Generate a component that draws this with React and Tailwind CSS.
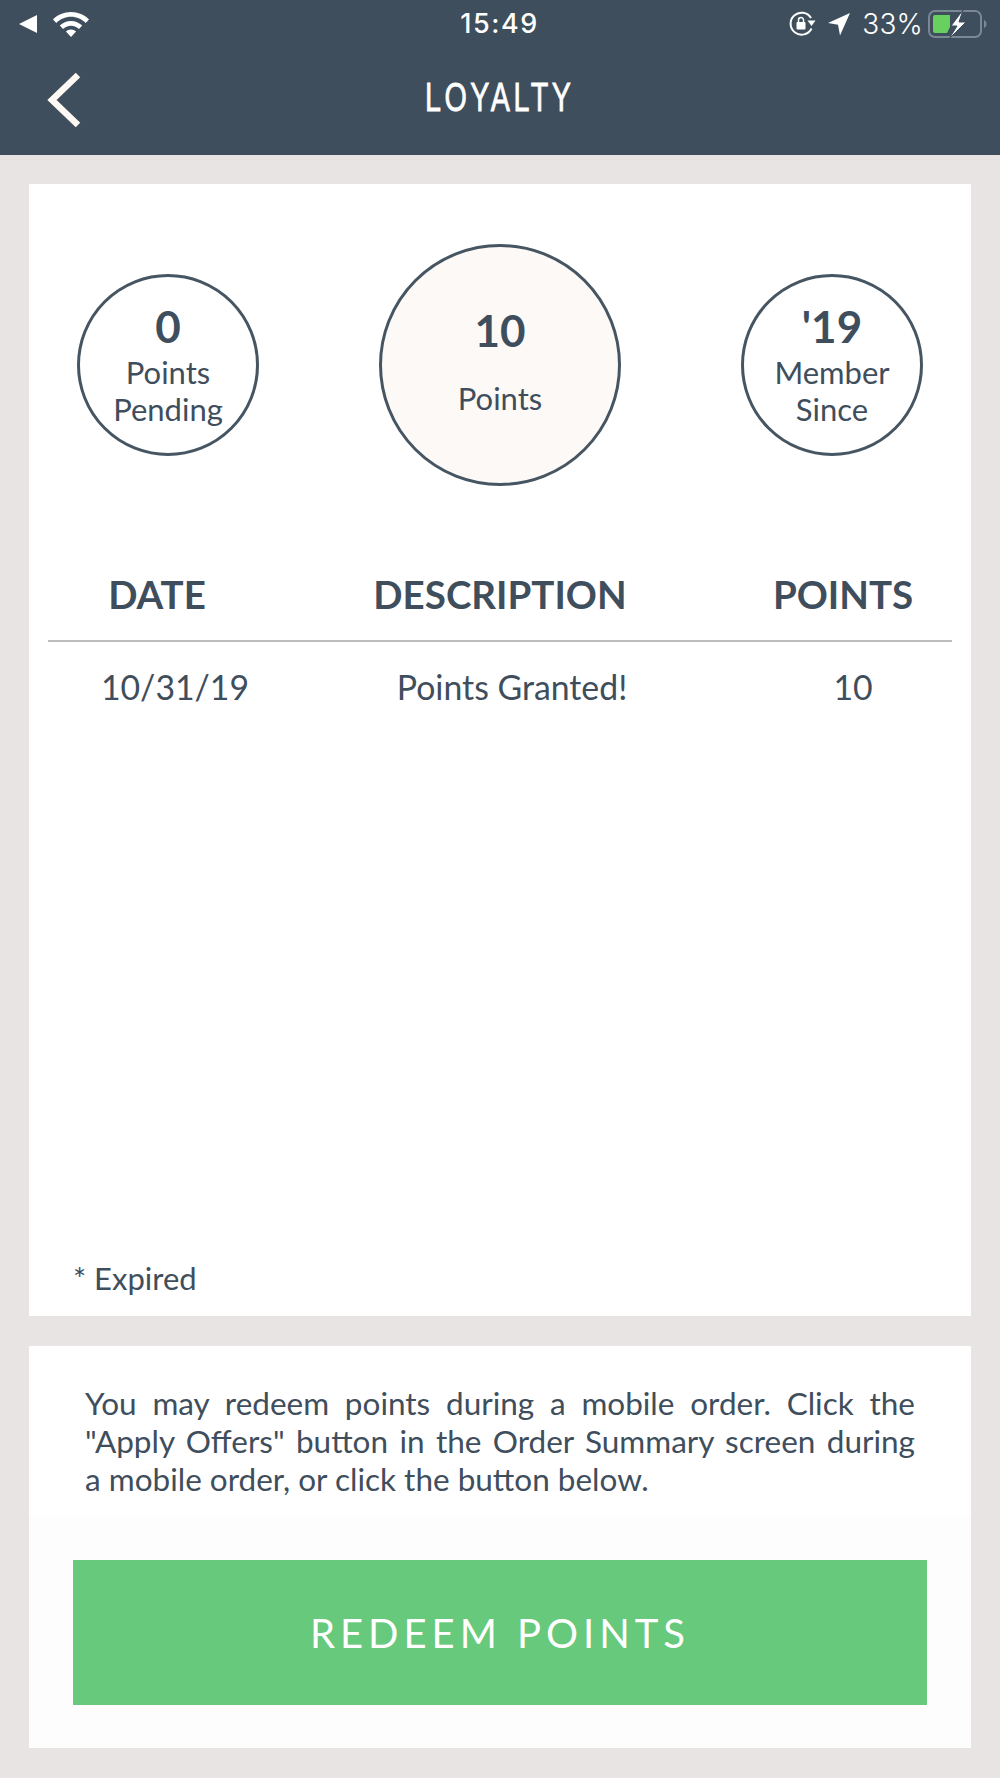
const Circle = ({ value, lines }) => (
  <div className="w-[182px] h-[182px] rounded-full border-[3px] border-[#465562] flex flex-col items-center pt-[25px] text-[#3f4e5c]">
    <p className="text-[44px] leading-[48px] font-bold mb-[4px]">{value}</p>
    {lines.map((line) => (
      <p key={line} className="text-[31px] leading-[37px]">
        {line}
      </p>
    ))}
  </div>
);

const WifiIcon = () => (
  <svg width="38" height="28" viewBox="0 0 38 28" fill="#fff">
    <path d="M19 2C12 2 5.500 4.800 1 9.500L4.300 13C8 9.200 13.300 6.800 19 6.800S30 9.200 33.700 13L37 9.500C32.500 4.800 26 2 19 2Z" />
    <path d="M19 11C14.700 11 10.700 12.700 7.800 15.600L11 19C13 17 15.900 15.700 19 15.700S25 17 27 19L30.200 15.600C27.300 12.700 23.300 11 19 11Z" />
    <path d="M19 19.500C17 19.500 15.200 20.300 13.900 21.600L19 27L24.100 21.600C22.800 20.300 21 19.500 19 19.500Z" />
  </svg>
);

const RotationLockIcon = () => (
  <svg width="28" height="26" viewBox="0 0 28 26" fill="none">
    <path d="M23.500 17.500A11 11 0 1 1 23 7" stroke="#fff" strokeWidth="2" />
    <path d="M19.500 9.500H27.500L23.500 15Z" fill="#fff" />
    <rect x="8.500" y="11" width="9" height="7.500" rx="1" fill="#fff" />
    <path d="M10.500 11V9A2.500 2.500 0 0 1 15.500 9V11" stroke="#fff" strokeWidth="1.500" />
  </svg>
);

const LocationIcon = () => (
  <svg width="24" height="24" viewBox="0 0 24 24" fill="#fff">
    <path d="M23 1L13 23.500L11 12.800L1 11Z" />
  </svg>
);

const BatteryIcon = () => (
  <svg width="60" height="30" viewBox="0 0 60 30" fill="none">
    <rect x="1" y="2" width="52" height="26" rx="6" stroke="#7b8792" strokeWidth="2" />
    <path d="M56 11C58 12 58.500 13.500 58.500 15S58 18 56 19Z" fill="#7b8792" />
    <path d="M7 6Q5 6 5 8V22Q5 24 7 24H19L22 18V6Z" fill="#67d05f" />
    <path d="M35 1L23 17H29L21 30L38 13H31Z" fill="#fff" stroke="#3f4e5c" strokeWidth="1" />
  </svg>
);

const App = () => {
  return (
    <div className="w-[1000px] h-[1778px] bg-[#e8e4e3] [font-family:Lato,sans-serif] text-[#3f4e5c] overflow-hidden">
      <header className="h-[155px] bg-[#3f4e5c] text-white">
        <div className="h-[48px] pl-[18px] pr-[12px] flex items-center justify-between">
          <div className="w-[300px] flex items-center gap-[14px]">
            <svg width="20" height="20" viewBox="0 0 20 20" fill="#fff">
              <path d="M19 1V19L1 10Z" />
            </svg>
            <WifiIcon />
          </div>
          <p className="text-[27px] [font-family:Inter,sans-serif] font-medium tracking-[1.500px] mr-[7px]">15:49</p>
          <div className="w-[300px] flex items-center justify-end gap-[11px]">
            <RotationLockIcon />
            <LocationIcon />
            <span className="text-[28px] [font-family:Inter,sans-serif] font-light -mr-[6px] tracking-[0.2px]">33%</span>
            <BatteryIcon />
          </div>
        </div>
        <div className="relative h-[100px] flex items-center justify-center">
          <svg className="absolute left-[46px] top-[24px]" width="36" height="56" viewBox="0 0 36 56" fill="none">
            <path d="M32 3L6 28L32 53" stroke="#fffaf6" strokeWidth="6.500" />
          </svg>
          <h1 className="text-[41px] leading-[40px] [font-family:'Liberation_Sans',sans-serif] tracking-[5px] scale-x-[0.7] [-webkit-text-stroke:0.8px_white] -mt-[2px]">
            LOYALTY
          </h1>
        </div>
      </header>

      <main className="px-[29px] pt-[29px] flex flex-col gap-[30px]">
        <section className="h-[1132px] bg-white flex flex-col">
          <div className="h-[301px] pt-[61px] pl-[48px] pr-[48px] flex items-center justify-between">
            <Circle value="0" lines={["Points", "Pending"]} />
            <div className="w-[242px] h-[242px] rounded-full border-[3px] border-[#465562] bg-[#fdf9f6] flex flex-col items-center pt-[59px]">
              <p className="text-[44px] leading-[48px] font-bold">10</p>
              <p className="text-[31px] leading-[37px] mt-[26px]">Points</p>
            </div>
            <Circle value="'19" lines={["Member", "Since"]} />
          </div>

          <div className="mx-[19px] mt-[57px] flex-1 flex flex-col">
            <div className="grid grid-cols-[218px_1fr_218px] h-[100px] pt-[30px] border-b-2 border-[#bdbdbd] text-center text-[38.5px] leading-[44px] font-bold">
              <p>DATE</p>
              <p>DESCRIPTION</p>
              <p>POINTS</p>
            </div>
            <div className="grid grid-cols-[218px_1fr_218px] pt-[23px] text-center text-[33.8px] leading-[44px]">
              <p className="pl-[36px] whitespace-nowrap">10/31/19</p>
              <p className="pl-[24px]">Points Granted!</p>
              <p className="pl-[20px]">10</p>
            </div>
            <p className="mt-auto mb-[18px] ml-[25px] text-[31px] leading-[40px]">* Expired</p>
          </div>
        </section>

        <section className="h-[402px] bg-white flex flex-col">
          <div className="h-[170px] px-[56px] pt-[38px]">
            <p className="text-[31.5px] leading-[38px] text-justify">
              You may redeem points during a mobile order. Click the "Apply Offers" button in the Order Summary screen during a{"\u00a0"}mobile order, or click the button below.
            </p>
          </div>
          <div className="flex-1 bg-[#fdfdfd] px-[44px] pt-[44px]">
            <button className="w-full h-[145px] bg-[#67c97b] text-white text-[40px] tracking-[5px]">
              REDEEM POINTS
            </button>
          </div>
        </section>
      </main>
    </div>
  );
};

export default App;
